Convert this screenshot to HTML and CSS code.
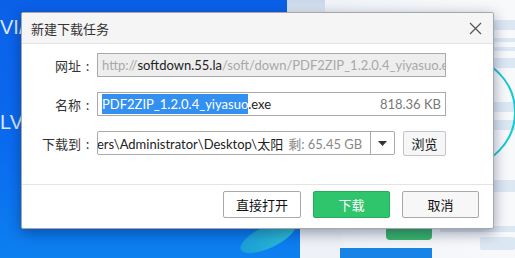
FILE: index.html
```html
<!DOCTYPE html>
<html>

<head>
    <meta charset="utf-8">
    <meta name="viewport" content="width=device-width, initial-scale=1">
    <title>新建下载任务</title>
    <link rel="stylesheet" href="styles.css">
</head>

<body>
    <div class="desktop">
        <!-- Hintergrund: Desktop mit Fenstern -->
        <div class="bg-blue"></div>
        <div class="bg-white"></div>
        <div class="bg-tile"></div>
        <div class="bar bar1"></div>
        <div class="bar bar2"></div>
        <div class="bar bar3"></div>
        <div class="bar bar4"></div>
        <div class="bar bar5"></div>
        <div class="bar bar6"></div>
        <div class="bar bar7"></div>
        <div class="bar bar8"></div>
        <div class="bar bar9"></div>
        <div class="arc"></div>
        <div class="leaf"></div>
        <div class="circle"></div>
        <div class="bluebar"></div>
        <div class="greenbar"></div>
        <div class="desk-text t1">VI/</div>
        <div class="desk-text t2">LV</div>

        <div class="dialog">
            <div class="titlebar">
                <span class="title">新建下载任务</span>
                <svg class="close" width="13" height="13" viewBox="0 0 13 13">
                    <path d="M1 1 L12 12 M12 1 L1 12" stroke="#555" stroke-width="1.2" fill="none" />
                </svg>
            </div>

            <div class="content">
                <div class="row">
                    <label class="lbl">网址<span class="colon">:</span></label>
                    <div class="field field-gray">
                        <span class="dim">http://</span><span>softdown.55.la</span><span class="dim">/soft/down/PDF2ZIP_1.2.0.4_yiyasuo.exe</span>
                    </div>
                </div>
                <div class="row">
                    <label class="lbl">名称<span class="colon">:</span></label>
                    <div class="field field-name">
                        <span class="name"><span class="sel">PDF2ZIP_1.2.0.4_yiyasuo</span>.exe</span>
                        <span class="size">818.36 KB</span>
                    </div>
                </div>
                <div class="row">
                    <label class="lbl">下载到<span class="colon">:</span></label>
                    <div class="combo">
                        <div class="combo-text">
                            <span class="path">ers\Administrator\Desktop\太阳</span>
                            <span class="free">剩: 65.45 GB</span>
                        </div>
                        <div class="combo-arrow">
                            <svg width="9" height="5" viewBox="0 0 9 5">
                                <path d="M0 0 L9 0 L4.5 5 Z" fill="#333" />
                            </svg>
                        </div>
                    </div>
                    <button class="btn btn-small">浏览</button>
                </div>
            </div>

            <div class="footer">
                <button class="btn">直接打开</button>
                <button class="btn btn-green">下载</button>
                <button class="btn">取消</button>
            </div>
        </div>
    </div>
</body>

</html>
```

FILE: styles.css
```css
* {
    box-sizing: border-box;
}

body {
    margin: 0;
    font-family: "Noto Sans CJK SC", "Noto Sans", sans-serif;
    font-size: 13px;
    color: #222;
}

.desktop {
    position: relative;
    width: 515px;
    height: 258px;
    overflow: hidden;
    background-color: #f6f8fb;
}

/* Hintergrund */
.bg-blue {
    position: absolute;
    left: 0;
    top: 0;
    width: 300px;
    height: 258px;
    background: linear-gradient(180deg, #0b60e8 0%, #0a6cf0 60%, #0d80f0 100%);
}

.bg-white {
    position: absolute;
    left: 300px;
    top: 0;
    width: 215px;
    height: 258px;
    background: linear-gradient(90deg, #eef2f7, #f8f9fb);
}

.bg-tile {
    position: absolute;
    left: 287px;
    top: 0;
    width: 38px;
    height: 14px;
    background: linear-gradient(180deg, #c8d7ea, #e6ecf3);
}

.bar {
    position: absolute;
    background-color: #dce7f4;
}

.bar1 { left: 494px; top: 20px; width: 21px; height: 10px; }
.bar2 { left: 494px; top: 38px; width: 21px; height: 4px; }
.bar3 { left: 494px; top: 47px; width: 21px; height: 4px; }
.bar4 { left: 494px; top: 58px; width: 21px; height: 10px; }
.bar5 { left: 494px; top: 102px; width: 21px; height: 10px; }
.bar6 { left: 494px; top: 120px; width: 21px; height: 10px; }
.bar7 { left: 494px; top: 180px; width: 21px; height: 12px; }
.bar8 { left: 440px; top: 226px; width: 75px; height: 6px; }
.bar9 { left: 480px; top: 237px; width: 35px; height: 13px; border-radius: 2px; }

.arc {
    position: absolute;
    left: 404px;
    top: 56px;
    width: 112px;
    height: 112px;
    border: 2px solid #12c9d6;
    border-radius: 50%;
}

.leaf {
    position: absolute;
    left: 238px;
    top: 226px;
    width: 60px;
    height: 22px;
    border-radius: 50%;
    background: linear-gradient(90deg, #1a9ed8, #2fc3d6);
    transform: rotate(-25deg);
}

.circle {
    position: absolute;
    left: 300px;
    top: 222px;
    width: 44px;
    height: 50px;
    border-radius: 50%;
    background-color: #eef1f5;
}

.bluebar {
    position: absolute;
    left: 340px;
    top: 248px;
    width: 92px;
    height: 10px;
    background-color: #1883e6;
}

.greenbar {
    position: absolute;
    left: 386px;
    top: 228px;
    width: 46px;
    height: 12px;
    border-radius: 0 0 4px 4px;
    background-color: #3ab46a;
}

.desk-text {
    position: absolute;
    left: 0;
    color: #dfe9ff;
    font-family: "Liberation Sans", sans-serif;
    font-size: 20px;
}

.t1 { top: 16px; }
.t2 { top: 111px; }

/* Dialog */
.dialog {
    position: absolute;
    left: 21px;
    top: 12px;
    width: 473px;
    height: 217px;
    display: flex;
    flex-direction: column;
    background-color: #fff;
    border: 1px solid #a7a7a7;
    border-radius: 2px;
    box-shadow: 0 4px 14px rgba(0, 20, 60, 0.4);
}

.titlebar {
    height: 31px;
    display: flex;
    align-items: center;
    justify-content: space-between;
    padding: 0 11px 0 9px;
    background-color: #f5f5f5;
    border-bottom: 1px solid #e2e2e2;
}

.title {
    font-size: 13px;
    color: #333;
}

.content {
    flex: 1;
    display: flex;
    flex-direction: column;
    gap: 15px;
    padding-top: 9px;
    border-bottom: 1px solid #e4e4e4;
}

.row {
    display: flex;
    align-items: center;
    height: 24px;
}

.lbl {
    width: 75px;
    padding-right: 3px;
    text-align: right;
    color: #333;
}

.colon {
    display: inline-block;
    width: 13px;
    text-align: center;
}

.field {
    width: 349px;
    height: 24px;
    display: flex;
    align-items: center;
    padding: 0 4px;
    border: 1px solid #aaa;
    font-family: Lato, "Noto Sans CJK SC", sans-serif;
    white-space: nowrap;
    overflow: hidden;
}

.field-gray {
    background-color: #eeeeee;
}

.dim {
    color: #a8a8a8;
}

.field-name {
    justify-content: space-between;
}

.sel {
    background-color: #3390f0;
    color: #fff;
    padding: 2px 0;
}

.size {
    color: #777;
}

.combo {
    width: 298px;
    height: 24px;
    display: flex;
    border: 1px solid #aaa;
    border-radius: 2px;
}

.combo-text {
    flex: 1;
    display: flex;
    align-items: center;
    gap: 5px;
    padding-left: 3px;
    font-family: Lato, "Noto Sans CJK SC", sans-serif;
    white-space: nowrap;
    overflow: hidden;
}

.path {
    margin-left: -4px;
}

.free {
    color: #888;
}

.combo-arrow {
    width: 24px;
    display: flex;
    align-items: center;
    justify-content: center;
    border-left: 1px solid #aaa;
}

.btn {
    width: 77px;
    height: 27px;
    font-family: "Noto Sans CJK SC", sans-serif;
    font-size: 13px;
    color: #111;
    background-color: #fff;
    border: 1px solid #a9a9a9;
    border-radius: 2px;
    padding: 0;
}

.btn-small {
    width: 43px;
    height: 25px;
    margin-left: 8px;
    background-color: #f6f6f6;
    border-color: #c4c4c4;
}

.btn-green {
    background-color: #2fc56c;
    border-color: #26ad5b;
    color: #fff;
}

.footer {
    height: 43px;
    display: flex;
    justify-content: flex-end;
    gap: 12px;
    padding: 6px 14px 0 0;
}

.footer .btn:first-child {
    width: 78px;
}

.footer .btn:last-child {
    background-color: #f7f7f7;
}
```
